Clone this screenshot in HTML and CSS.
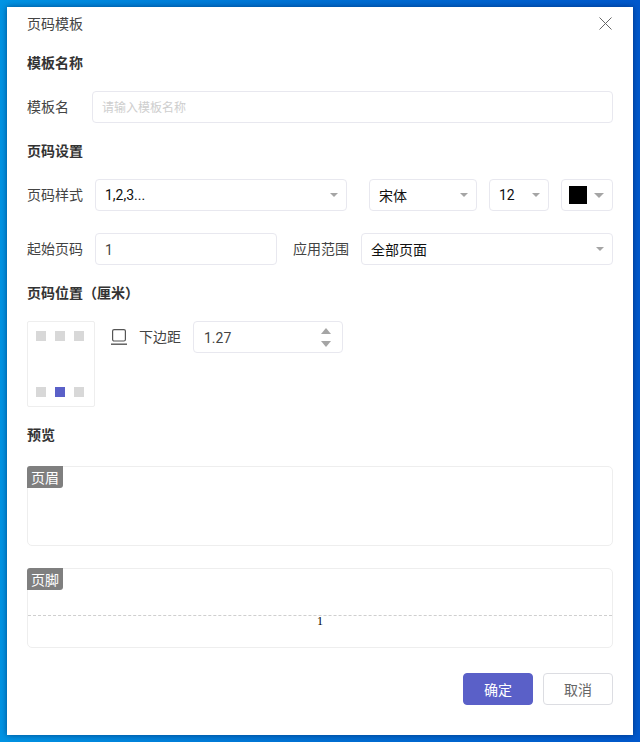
FILE: index.html
```html
<!DOCTYPE html>
<html lang="zh-CN">
<head>
<meta charset="utf-8">
<title>页码模板</title>
<link rel="stylesheet" href="styles.css">
</head>
<body>
<div class="dialog">
  <header class="dialog-head">
    <span class="dialog-title">页码模板</span>
    <svg class="close" width="13" height="13" viewBox="0 0 13 13"><path d="M.5.5l12 12M12.5.5l-12 12" stroke="#666" fill="none"/></svg>
  </header>

  <h2 class="section first">模板名称</h2>
  <div class="row name-row">
    <label class="label">模板名</label>
    <div class="field grow placeholder">请输入模板名称</div>
  </div>

  <h2 class="section s2">页码设置</h2>
  <div class="row style-row">
    <label class="label">页码样式</label>
    <div class="field select w252"><span>1,2,3...</span><i class="caret"></i></div>
    <div class="field select w108"><span>宋体</span><i class="caret"></i></div>
    <div class="field select w60"><span>12</span><i class="caret"></i></div>
    <div class="field select w52"><b class="swatch"></b><i class="caret big"></i></div>
  </div>
  <div class="row start-row">
    <label class="label">起始页码</label>
    <div class="field w182"><span class="val">1</span></div>
    <label class="label range">应用范围</label>
    <div class="field select grow"><span>全部页面</span><i class="caret"></i></div>
  </div>

  <h2 class="section s3">页码位置（厘米）</h2>
  <div class="pos">
    <div class="pos-grid">
      <div class="dots"><i></i><i></i><i></i></div>
      <div class="dots"><i></i><i class="on"></i><i></i></div>
    </div>
    <div class="margin">
      <svg class="margin-icon" width="16" height="16" viewBox="0 0 16 16"><rect x="1.6" y="0.6" width="12.8" height="11.4" rx="1.5" fill="none" stroke="#555" stroke-width="1.2"/><path d="M0 15.2h16" stroke="#555" stroke-width="1.4"/></svg>
      <label class="label">下边距</label>
      <div class="field spin"><span class="val">1.27</span><span class="arrows"><i class="up"></i><i class="down"></i></span></div>
    </div>
  </div>

  <h2 class="section s4">预览</h2>
  <div class="preview p1"><span class="tag">页眉</span></div>
  <div class="preview p2"><span class="tag">页脚</span><div class="guide"></div><div class="num">1</div></div>

  <footer class="actions">
    <button class="btn primary">确定</button>
    <button class="btn">取消</button>
  </footer>
</div>
</body>
</html>
```
FILE: styles.css
```css
* { box-sizing: border-box; }
html, body { margin: 0; height: 742px; overflow: hidden; }
body {
  padding: 7px;
  background: linear-gradient(90deg, #0094e4 0, #0070d4 50%, #0058cc 100%);
  font-family: Roboto, "Noto Sans CJK SC", "Liberation Sans", sans-serif;
  font-size: 14px;
  color: #444;
}
.dialog {
  width: 626px;
  height: 728px;
  background: #fff;
  padding: 0 20px;
  box-shadow: 0 0 6px rgba(0, 30, 80, .6);
}
.dialog-head { height: 34px; display: flex; justify-content: space-between; align-items: center; }
.dialog-title { font-size: 14px; line-height: 20px; color: #444; }
.close { margin-right: 1px; margin-top: -2px; }
.section { margin: 0; height: 20px; font-size: 14px; line-height: 20px; font-weight: 700; color: #333; }
.first { margin-top: 12px; }
.s2, .s3, .s4 { margin-top: 18px; }
.row { display: flex; align-items: center; }
.name-row { margin-top: 18px; gap: 23px; }
.style-row { margin-top: 18px; }
.start-row { margin-top: 22px; }
.label { font-size: 14px; line-height: 20px; color: #444; white-space: nowrap; }
.field {
  height: 32px;
  border: 1px solid #e8e8ef;
  border-radius: 4px;
  padding: 0 8px 0 9px;
  display: flex;
  align-items: center;
  font-size: 14px;
  color: #111;
  background: #fff;
}
.val { color: #444; padding-top: 1px; }
.grow { flex: 1; }
.placeholder { font-size: 12px; color: #cecece; padding-bottom: 2px; }
.select { justify-content: space-between; }
.w252 { width: 252px; margin-left: 12px; }
.w108 { width: 108px; margin-left: 22px; }
.w60 { width: 60px; margin-left: 12px; }
.w52 { width: 52px; margin-left: 12px; padding: 0 8px 0 7px; }
.w182 { width: 182px; margin-left: 12px; }
.range { margin-left: 16px; margin-right: 12px; }
.caret { width: 0; height: 0; border: 4px solid transparent; border-top: 4px solid #a5a5a5; border-bottom: 0; }
.caret.big { border-width: 5px 5px 0; }
.swatch { width: 18px; height: 18px; background: #000; }
.pos { display: flex; margin-top: 18px; }
.pos-grid {
  width: 68px;
  height: 86px;
  border: 1px solid #eeeeee;
  border-radius: 2px;
  padding: 9px 10px 9px 8px;
  display: flex;
  flex-direction: column;
  justify-content: space-between;
}
.dots { display: flex; justify-content: space-between; }
.dots i { width: 10px; height: 10px; background: #d8d8d8; }
.dots i.on { background: #5a60c8; }
.margin { display: flex; align-items: center; height: 32px; margin-left: 16px; }
.margin-icon { margin-right: 12px; }
.spin { width: 150px; margin-left: 12px; justify-content: space-between; padding: 0 11px 0 10px; }
.arrows { display: flex; flex-direction: column; gap: 7px; }
.arrows i { width: 0; height: 0; border: 5px solid transparent; }
.arrows .up { border-top: 0; border-bottom: 6px solid #a5a5a5; }
.arrows .down { border-bottom: 0; border-top: 6px solid #a5a5a5; }
.preview { position: relative; height: 80px; border: 1px solid #eeeeee; border-radius: 5px; }
.p1 { margin-top: 21px; }
.p2 { margin-top: 22px; }
.tag {
  position: absolute;
  left: -1px;
  top: -1px;
  width: 36px;
  height: 22px;
  background: #7f7f7f;
  color: #fff;
  border-radius: 3px 0 3px 0;
  font-size: 14px;
  line-height: 24px;
  text-align: center;
}
.guide { position: absolute; left: 0; right: 0; top: 46px; border-top: 1px dashed #cfcfcf; }
.num {
  position: absolute;
  left: 0;
  right: 0;
  top: 45px;
  text-align: center;
  font-family: "Liberation Serif", serif;
  font-size: 12px;
  line-height: 14px;
  color: #000;
}
.actions { display: flex; justify-content: flex-end; gap: 10px; margin-top: 25px; }
.btn {
  width: 70px;
  height: 32px;
  border: 1px solid #dcdde2;
  border-radius: 4px;
  background: #fff;
  color: #666;
  font: inherit;
  padding: 0;
}
.btn.primary { background: #5a60c8; border-color: #5a60c8; color: #fff; }
```
